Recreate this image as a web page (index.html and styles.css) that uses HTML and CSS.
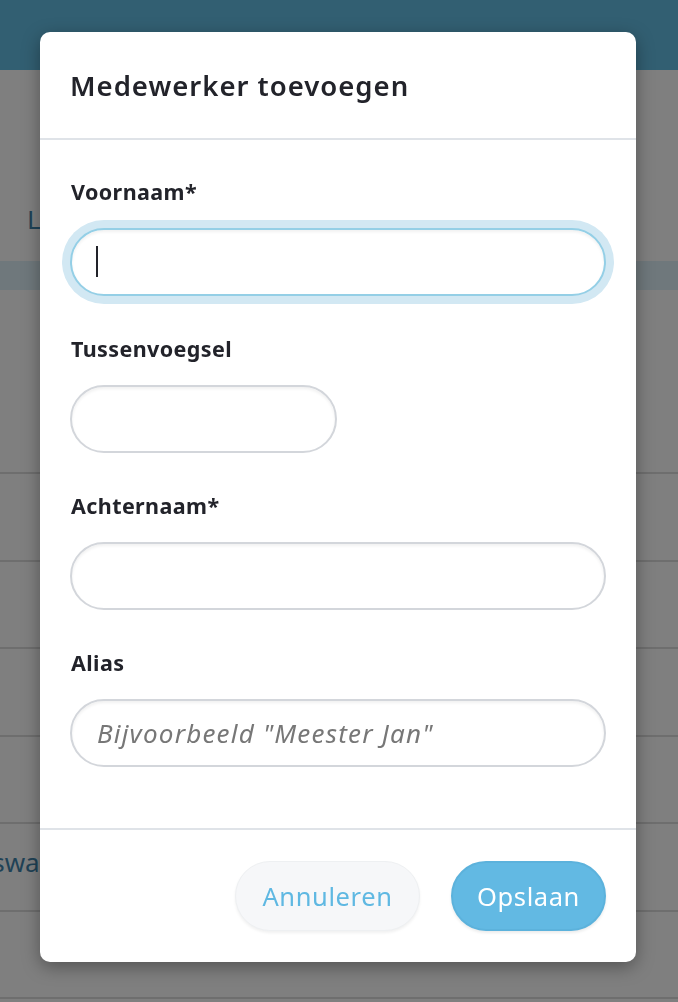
FILE: index.html
```html
<!DOCTYPE html>
<html lang="nl">
<head>
<meta charset="utf-8">
<title>Medewerker toevoegen</title>
<link rel="stylesheet" href="styles.css">
</head>
<body>
<div class="page">
  <header class="topbar"></header>
  <main class="content">
    <h1 class="page-title">Lijst medewerkers</h1>
    <div class="band"></div>
    <div class="row row-first"></div>
    <div class="row"></div>
    <div class="row"></div>
    <div class="row"></div>
    <div class="row"></div>
    <div class="row"><span class="row-text">Wachtswa</span></div>
    <div class="row"></div>
  </main>
</div>

<div class="modal" role="dialog" aria-labelledby="modal-title">
  <div class="modal-header">
    <h2 id="modal-title" class="modal-title">Medewerker toevoegen</h2>
  </div>
  <form class="modal-body">
    <div class="field">
      <label class="label" for="voornaam">Voornaam*</label>
      <div class="input-wrap">
        <input id="voornaam" class="input input-focus" type="text">
        <span class="caret"></span>
      </div>
    </div>
    <div class="field">
      <label class="label" for="tussen">Tussenvoegsel</label>
      <input id="tussen" class="input input-short" type="text">
    </div>
    <div class="field">
      <label class="label" for="achternaam">Achternaam*</label>
      <input id="achternaam" class="input" type="text">
    </div>
    <div class="field">
      <label class="label" for="alias">Alias</label>
      <input id="alias" class="input" type="text" placeholder="Bijvoorbeeld &quot;Meester Jan&quot;">
    </div>
  </form>
  <div class="modal-footer">
    <button class="btn btn-cancel" type="button">Annuleren</button>
    <button class="btn btn-save" type="button">Opslaan</button>
  </div>
</div>
</body>
</html>
```

FILE: styles.css
```css
* { box-sizing: border-box; }
html, body {
  margin: 0;
  padding: 0;
  height: 100%;
  overflow: hidden;
  font-family: "Noto Sans", "Open Sans", sans-serif;
}
body { background: #7f7f7f; }

.page { width: 678px; }
.topbar {
  height: 70px;
  background: #325f72;
}
.content { padding: 0; }
.page-title {
  margin: 0;
  padding: 131px 0 0 27px;
  height: 191px;
  font-size: 26px;
  font-weight: 400;
  line-height: 36px;
  color: #1f4256;
  white-space: nowrap;
}
.band {
  height: 29px;
  background: #6f787c;
}
.row {
  height: 87.5px;
  border-bottom: 2px solid #6e6e6e;
  display: flex;
  align-items: center;
}
.row-first { height: 184px; }
.row-text {
  margin-left: -84px;
  padding-bottom: 10px;
  font-size: 26px;
  color: #1f4256;
  white-space: nowrap;
}

.modal {
  position: fixed;
  left: 40px;
  top: 32px;
  width: 596px;
  background: #fff;
  border-radius: 10px;
  box-shadow: 0 5px 18px rgba(0,0,0,0.35);
  color: #22232a;
}
.modal-header {
  height: 108px;
  padding: 0 30px;
  display: flex;
  align-items: center;
  border-bottom: 2px solid #dfe3e8;
}
.modal-title {
  margin: 0;
  padding-top: 2px;
  font-size: 27.5px;
  font-weight: 600;
  letter-spacing: 1px;
  line-height: 36px;
}
.modal-body {
  padding: 38px 30px 22px;
  border-bottom: 2px solid #dfe3e8;
}
.field {
  display: flex;
  flex-direction: column;
  align-items: flex-start;
  margin-bottom: 39px;
}
.label {
  display: block;
  padding-left: 1px;
  font-size: 21.5px;
  font-weight: 700;
  letter-spacing: 0.4px;
  line-height: 28px;
  margin-bottom: 22px;
}
.input-wrap {
  position: relative;
  width: 100%;
}
.input {
  width: 100%;
  height: 68px;
  border: 2px solid #d3d6db;
  border-radius: 34px;
  padding: 0 25px;
  font-family: inherit;
  font-size: 26px;
  letter-spacing: 1.2px;
  color: #22232a;
  background: #fff;
  box-shadow: inset 0 2px 3px rgba(0,0,0,0.06);
  outline: none;
}
.input-short { width: 267px; }
.input::placeholder {
  color: #777;
  font-style: italic;
}
.input-focus {
  border-color: #94cfe6;
  box-shadow: 0 0 0 8px #d2e8f3, inset 0 2px 3px rgba(0,0,0,0.06);
}
.caret {
  position: absolute;
  left: 26px;
  top: 18px;
  width: 2px;
  height: 31px;
  background: #22232a;
}

.modal-footer {
  display: flex;
  justify-content: flex-end;
  gap: 31px;
  padding: 31px 30px 31px;
}
.btn {
  height: 70px;
  border-radius: 35px;
  font-family: inherit;
  font-size: 25.5px;
  letter-spacing: 0.6px;
  padding: 0;
  cursor: pointer;
}
.btn-cancel {
  width: 185px;
  background: #f6f7f9;
  border: 1px solid #eef0f2;
  color: #5fb8e2;
  box-shadow: 0 2px 3px rgba(0,0,0,0.06);
}
.btn-save {
  width: 155px;
  background: #62b9e3;
  border: 2px solid #5cb2dc;
  color: #fff;
  box-shadow: 0 2px 3px rgba(0,0,0,0.08);
}
```
